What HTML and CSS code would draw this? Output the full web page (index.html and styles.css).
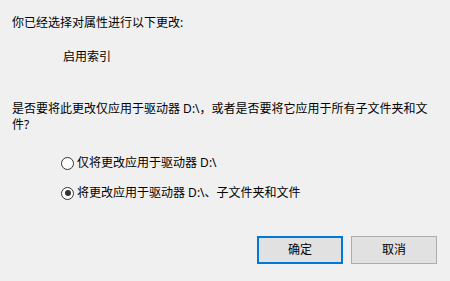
FILE: index.html
```html
<!DOCTYPE html>
<html lang="zh-CN">
<head>
<meta charset="utf-8">
<link rel="stylesheet" href="styles.css">
</head>
<body>
<div class="dialog">
  <p class="intro">你已经选择对属性进行以下更改:</p>
  <p class="change">启用索引</p>
  <p class="question">是否要将此更改仅应用于驱动器 D:\，或者是否要将它应用于所有子文件夹和文件?</p>
  <div class="options">
    <label class="option"><span class="radio"></span><span>仅将更改应用于驱动器 D:\</span></label>
    <label class="option"><span class="radio checked"></span><span>将更改应用于驱动器 D:\、子文件夹和文件</span></label>
  </div>
  <div class="buttons">
    <button class="btn primary">确定</button>
    <button class="btn">取消</button>
  </div>
</div>
</body>
</html>
```
FILE: styles.css
```css
html, body {
  margin: 0;
  padding: 0;
  background: #f0f0f0;
}
body {
  width: 450px;
  height: 281px;
  overflow: hidden;
  font-family: "Noto Sans", "Noto Sans CJK SC", sans-serif;
  font-size: 12px;
  line-height: 16px;
  color: #000;
}
.dialog {
  padding: 15px 13px 0 12px;
  display: flex;
  flex-direction: column;
}
p {
  margin: 0;
}
.change {
  margin-top: 18px;
  margin-left: 51px;
}
.question {
  margin-top: 36px;
  width: 420px;
}
.options {
  margin-top: 22px;
  margin-left: 49px;
  display: flex;
  flex-direction: column;
  gap: 14px;
}
.option {
  display: flex;
  align-items: center;
  gap: 3px;
  height: 16px;
}
.radio {
  width: 11px;
  height: 11px;
  border: 1px solid #333;
  border-radius: 50%;
  background: #fff;
  box-sizing: content-box;
  position: relative;
}
.radio.checked::after {
  content: "";
  position: absolute;
  left: 2.5px;
  top: 2.5px;
  width: 6px;
  height: 6px;
  border-radius: 50%;
  background: #333;
}
.buttons {
  margin-top: 35px;
  display: flex;
  justify-content: flex-end;
  gap: 8px;
}
.btn {
  width: 86px;
  height: 28px;
  box-sizing: border-box;
  border: 1px solid #adadad;
  background: #e1e1e1;
  font: inherit;
  color: #000;
  padding: 0;
}
.btn.primary {
  border: 2px solid #0078d7;
}
```
